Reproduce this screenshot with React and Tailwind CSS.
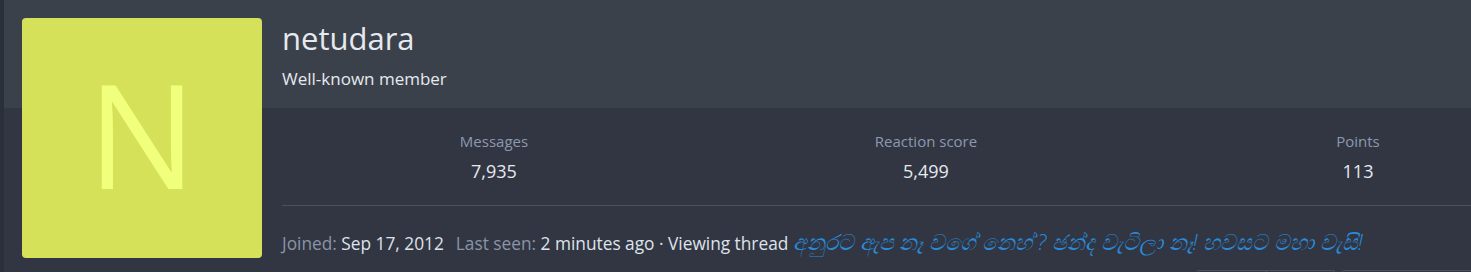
import React from 'react';

const stats = [
    { label: 'Messages', value: '7,935' },
    { label: 'Reaction score', value: '5,499' },
    { label: 'Points', value: '113' },
];

const App = () => {
    return (
        <div className="h-[272px] w-[1471px] overflow-hidden bg-[#2b2f39] pl-[4px] font-['Open_Sans',sans-serif]">
            <div className="flex h-full w-[1600px] bg-[linear-gradient(to_bottom,#3b414b_108px,#313642_108px)] pl-[18px] pt-[18px]">
                <div className="flex h-[240px] w-[240px] shrink-0 items-center justify-center rounded-[4px] bg-[#d6e15a] pb-[10px]">
                    <span className="text-[144px] font-normal leading-none text-[#f0ff7c]">N</span>
                </div>

                <div className="flex flex-1 flex-col pl-[20px]">
                    <div className="h-[90px]">
                        <h1 className="text-[31px] leading-[40px] text-[#e6e9ee]">netudara</h1>
                        <p className="mt-[9px] text-[17px] leading-[24px] text-[#e6e9ee]">Well-known member</p>
                    </div>

                    <div className="grid w-[1296px] grid-cols-3 -ml-[4px] pt-[23px] pb-[22px]">
                        {stats.map((s) => (
                            <div key={s.label} className="flex flex-col items-center">
                                <span className="text-[15px] leading-[20px] text-[#8d99ae]">{s.label}</span>
                                <span className="mt-[8px] text-[18px] font-medium leading-[24px] text-[#e6e9ee]">{s.value}</span>
                            </div>
                        ))}
                    </div>

                    <div className="h-[40px] border-t border-[#4b515c] pt-[23px] text-[17.3px] leading-[24px] whitespace-nowrap">
                        <span className="text-[#8a94a6]">Joined: </span>
                        <span className="text-[#dfe3ea]">Sep 17, 2012</span>
                        <span className="ml-[12px] text-[#8a94a6]">Last seen: </span>
                        <span className="text-[#dfe3ea]">2 minutes ago · Viewing thread </span>
                        <span className="text-[22px] font-light leading-[24px] italic text-[#2a8ad8]">අනුරට ඇප නෑ වගේ නෙහ් ? ඡන්ද වැටිලා නෑ! හවසට මහා වැසි!</span>
                    </div>

                    <div className="mt-auto flex gap-[7px] pl-[915px]">
                        <div className="flex h-[2px] w-[138px] rounded-t-[4px] border border-b-0 border-[#4b515c]">
                            <div className="w-[69px] border-r border-[#4b515c]" />
                        </div>
                        <div className="h-[2px] w-[200px] rounded-t-[4px] border border-b-0 border-[#4b515c]" />
                    </div>
                </div>
            </div>
        </div>
    );
};

export default App;
